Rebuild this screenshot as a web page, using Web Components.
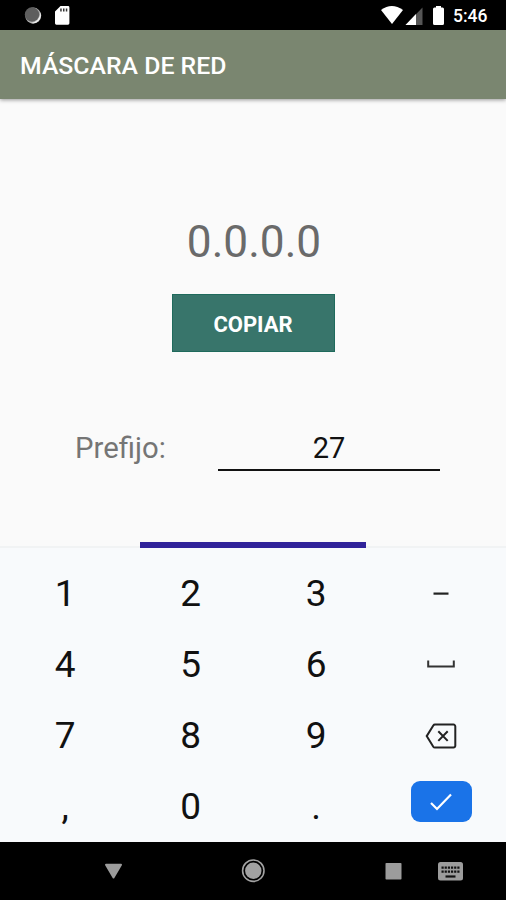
<!DOCTYPE html>
<html lang="es">
<head>
<meta charset="utf-8">
<title>Máscara de red</title>
<style>
html, body { margin: 0; }
body { width: 506px; height: 900px; overflow: hidden; font-family: Roboto, "Liberation Sans", sans-serif; }
</style>
</head>
<body>
<net-app>
  <status-bar>5:46</status-bar>
  <app-bar>MÁSCARA DE RED</app-bar>
  <mask-form result="0.0.0.0" action="COPIAR" label="Prefijo:" value="27"></mask-form>
  <num-pad></num-pad>
  <nav-bar></nav-bar>
</net-app>
<script>
const define = (name, html) => customElements.define(name, class extends HTMLElement {
  constructor() {
    super();
    const t = document.createElement('template');
    t.innerHTML = html;
    this.attachShadow({ mode: 'open' }).append(t.content.cloneNode(true));
  }
  connectedCallback() {
    this.shadowRoot.querySelectorAll('[data-from]').forEach(e => {
      e.textContent = this.getAttribute(e.dataset.from);
    });
  }
});

define('net-app', `<style>
:host { display: flex; flex-direction: column; width: 506px; height: 900px; background: #fafafa; }
</style><slot></slot>`);

define('status-bar', `<style>
:host { display: flex; flex: none; height: 30px; background: #000; color: #fff; font-size: 17.500px; font-weight: 500; line-height: 32px; }
svg { display: block; flex: none; }
span { width: 53px; }
</style>
<svg width="453" height="30" viewBox="0 0 453 30">
  <circle cx="33.2" cy="15.6" r="8" fill="#aaa"/>
  <path d="M40.3 12.5A8 8 0 0 1 30.5 23A10 10 0 0 0 40.3 12.5Z" fill="#eee"/>
  <circle cx="32" cy="14.5" r="7.2" fill="#5e5e5e"/>
  <path d="M60.5 6H68a1.4 1.4 0 0 1 1.4 1.4V23.300a1.400 1.400 0 0 1-1.400 1.400H56.400A1.400 1.400 0 0 1 55 23.300V11.500Z" fill="#fff"/>
  <path d="M60.200 8.500h1.500v3h-1.500zM63 8.500h1.500v3H63zM65.800 8.500h1.500v3h-1.500z" fill="#333"/>
  <path d="M381 10Q391.800 2 403 10L392 24Z" fill="#fff"/>
  <path d="M405.500 25L422.500 7.500V25Z" fill="#555"/>
  <path d="M405.500 25L416 14V25Z" fill="#fff"/>
  <path d="M436 6h5v1.500h1.500a1.500 1.500 0 0 1 1.500 1.500v14.500a1.500 1.500 0 0 1-1.500 1.500H434.500a1.500 1.500 0 0 1-1.500-1.500V9a1.500 1.500 0 0 1 1.500-1.500H436Z" fill="#fff"/>
</svg><span><slot></slot></span>`);

define('app-bar', `<style>
:host { display: flex; flex: none; align-items: center; box-sizing: border-box; height: 69px; padding: 1px 20px 0; background: #7a8670; color: #fff; font-size: 24.800px; font-weight: 500; box-shadow: 0 1px 4px rgba(0,0,0,.4); }
span { white-space: nowrap; }
</style><span><slot></slot></span>`);

define('mask-form', `<style>
:host { display: flex; flex: none; flex-direction: column; align-items: center; height: 449px; }
.result { margin: 116px 0 0 2px; height: 54px; line-height: 54px; font-size: 44.200px; color: #6a6a6a; }
button { margin-top: 25px; width: 163px; height: 58px; padding: 4px 0 0; border: 1px solid #1f6a5c; background: #38756b; color: #fff; font: 700 22px/1 Roboto, sans-serif; }
.row { display: grid; grid-template-columns: 143px 222px; align-self: stretch; margin: 76px 0 0 75px; height: 43px; }
.label { font-size: 29.300px; line-height: 40px; color: #757575; }
.field { box-sizing: border-box; border-bottom: 2px solid #111; text-align: center; font-size: 29px; line-height: 40px; color: #111; }
.edge { display: flex; justify-content: center; align-self: stretch; margin-top: auto; background: linear-gradient(transparent 4px, #f1f3f4 4px); }
.bar { width: 226px; height: 6px; background: #30239a; }
</style>
<div class="result" data-from="result"></div>
<button data-from="action"></button>
<div class="row"><div class="label" data-from="label"></div><div class="field" data-from="value"></div></div>
<div class="edge"><div class="bar"></div></div>`);

define('pad-key', `<style>
:host { display: flex; align-items: center; justify-content: center; font-size: 37px; line-height: 1; color: #111; }
</style><slot></slot>`);

define('num-pad', `<style>
:host { display: grid; flex: none; box-sizing: border-box; height: 294px; padding: 10px 2.500px 0; grid-template: repeat(4, 71px) / repeat(3, 125.500px) 124.500px; background: #f8fafc; }
svg { display: block; }
.enter { display: flex; align-items: center; justify-content: center; width: 61px; height: 41px; margin-bottom: 10px; border-radius: 9px; background: #1a73e8; }
</style>
<pad-key>1</pad-key><pad-key>2</pad-key><pad-key>3</pad-key>
<pad-key><svg width="32" height="32" viewBox="0 0 32 32"><path d="M8.500 15.600h15" stroke="#222" stroke-width="2.200"/></svg></pad-key>
<pad-key>4</pad-key><pad-key>5</pad-key><pad-key>6</pad-key>
<pad-key><svg width="32" height="32" viewBox="0 0 32 32"><path d="M3.200 11.500v6h25.600v-6" fill="none" stroke="#333" stroke-width="2"/></svg></pad-key>
<pad-key>7</pad-key><pad-key>8</pad-key><pad-key>9</pad-key>
<pad-key><svg width="32" height="32" viewBox="0 0 32 32"><path d="M10 4.600H28.500a1.800 1.800 0 0 1 1.800 1.800V25.800a1.800 1.800 0 0 1-1.800 1.800H10a2 2 0 0 1-1.700-.9L1.700 16.100L8.300 5.500A2 2 0 0 1 10 4.600ZM13.300 11.300l9.400 9.600M22.700 11.300l-9.400 9.600" fill="none" stroke="#222" stroke-width="2"/></svg></pad-key>
<pad-key>,</pad-key><pad-key>0</pad-key><pad-key>.</pad-key>
<pad-key><div class="enter"><svg width="24" height="20" viewBox="0 0 24 20"><path d="M2 11l6 6L22 2.500" fill="none" stroke="#fff" stroke-width="2.200"/></svg></div></pad-key>`);

define('nav-bar', `<style>
:host { display: block; flex: none; height: 58px; background: #000; }
svg { display: block; }
</style>
<svg width="506" height="58" viewBox="0 842 506 58">
  <path d="M106 864.800H121L113.500 877.500Z" fill="#9c9c9c" stroke="#9c9c9c" stroke-width="2" stroke-linejoin="round"/>
  <circle cx="253.300" cy="870.700" r="8.200" fill="#a2a2a2"/>
  <circle cx="253.300" cy="870.700" r="10.700" fill="none" stroke="#a2a2a2" stroke-width="1.600"/>
  <rect x="385.500" y="863" width="16" height="16.500" rx=".8" fill="#9c9c9c"/>
  <rect x="438" y="862" width="25" height="18.500" rx="2.500" fill="#9c9c9c"/>
  <path d="M441.500 867.700h18M441.500 871.700h18" stroke="#111" stroke-width="2.200" stroke-dasharray="2.200 .96"/>
  <path d="M445.500 876.500h10" stroke="#111" stroke-width="2.200"/>
</svg>`);
</script>
</body>
</html>
